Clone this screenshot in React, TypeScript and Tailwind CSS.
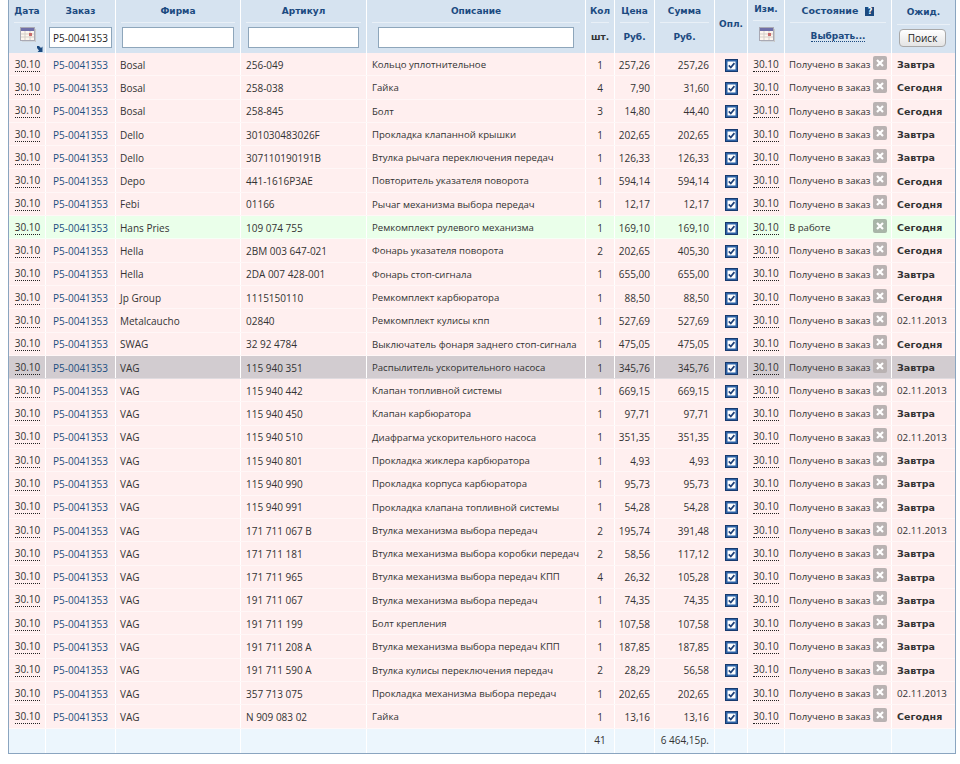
const cols = "grid grid-cols-[37px_70px_125px_126px_219px_29px_40px_60px_33px_37px_107px_63px]";
const cell = "border-r border-white flex items-center min-w-0 whitespace-nowrap";

type Row = [string, string, string, string, string, string, string];

const rows: Row[] = [
  ["Bosal", "256-049", "Кольцо уплотнительное", "1", "257,26", "257,26", "Завтра"],
  ["Bosal", "258-038", "Гайка", "4", "7,90", "31,60", "Сегодня"],
  ["Bosal", "258-845", "Болт", "3", "14,80", "44,40", "Сегодня"],
  ["Dello", "301030483026F", "Прокладка клапанной крышки", "1", "202,65", "202,65", "Завтра"],
  ["Dello", "307110190191B", "Втулка рычага переключения передач", "1", "126,33", "126,33", "Завтра"],
  ["Depo", "441-1616P3AE", "Повторитель указателя поворота", "1", "594,14", "594,14", "Сегодня"],
  ["Febi", "01166", "Рычаг механизма выбора передач", "1", "12,17", "12,17", "Сегодня"],
  ["Hans Pries", "109 074 755", "Ремкомплект рулевого механизма", "1", "169,10", "169,10", "Сегодня"],
  ["Hella", "2BM 003 647-021", "Фонарь указателя поворота", "2", "202,65", "405,30", "Сегодня"],
  ["Hella", "2DA 007 428-001", "Фонарь стоп-сигнала", "1", "655,00", "655,00", "Завтра"],
  ["Jp Group", "1115150110", "Ремкомплект карбюратора", "1", "88,50", "88,50", "Сегодня"],
  ["Metalcaucho", "02840", "Ремкомплект кулисы кпп", "1", "527,69", "527,69", "02.11.2013"],
  ["SWAG", "32 92 4784", "Выключатель фонаря заднего стоп-сигнала", "1", "475,05", "475,05", "Сегодня"],
  ["VAG", "115 940 351", "Распылитель ускорительного насоса", "1", "345,76", "345,76", "Завтра"],
  ["VAG", "115 940 442", "Клапан топливной системы", "1", "669,15", "669,15", "02.11.2013"],
  ["VAG", "115 940 450", "Клапан карбюратора", "1", "97,71", "97,71", "Завтра"],
  ["VAG", "115 940 510", "Диафрагма ускорительного насоса", "1", "351,35", "351,35", "02.11.2013"],
  ["VAG", "115 940 801", "Прокладка жиклера карбюратора", "1", "4,93", "4,93", "Завтра"],
  ["VAG", "115 940 990", "Прокладка корпуса карбюратора", "1", "95,73", "95,73", "Завтра"],
  ["VAG", "115 940 991", "Прокладка клапана топливной системы", "1", "54,28", "54,28", "Завтра"],
  ["VAG", "171 711 067 B", "Втулка механизма выбора передач", "2", "195,74", "391,48", "02.11.2013"],
  ["VAG", "171 711 181", "Втулка механизма выбора коробки передач", "2", "58,56", "117,12", "Завтра"],
  ["VAG", "171 711 965", "Втулка механизма выбора передач КПП", "4", "26,32", "105,28", "Завтра"],
  ["VAG", "191 711 067", "Втулка механизма выбора передач", "1", "74,35", "74,35", "Завтра"],
  ["VAG", "191 711 199", "Болт крепления", "1", "107,58", "107,58", "Завтра"],
  ["VAG", "191 711 208 A", "Втулка механизма выбора передач КПП", "1", "187,85", "187,85", "Завтра"],
  ["VAG", "191 711 590 A", "Втулка кулисы переключения передач", "2", "28,29", "56,58", "Завтра"],
  ["VAG", "357 713 075", "Прокладка механизма выбора передач", "1", "202,65", "202,65", "02.11.2013"],
  ["VAG", "N 909 083 02", "Гайка", "1", "13,16", "13,16", "Сегодня"],
];

function CalendarIcon() {
  return (
    <svg width="16" height="15" viewBox="0 0 16 15">
      <rect x="0.5" y="0.5" width="14" height="13" fill="#fdf6ee" stroke="#a9a9b4" />
      <rect x="1" y="1" width="13" height="3" fill="#6f6fa8" />
      <path d="M1 7h13M1 10h13M5 4v9M10 4v9" stroke="#d5cfc8" strokeWidth="1" />
      <rect x="9" y="6" width="3" height="3" fill="#c96b6b" />
      <path d="M15.5 2v13H2" fill="none" stroke="#c9c9c9" />
    </svg>
  );
}

function Checkbox() {
  return (
    <svg width="13" height="13" viewBox="0 0 13 13">
      <rect x="0.5" y="0.5" width="12" height="12" fill="#2d62a6" stroke="#173a6e" />
      <rect x="2.5" y="2.5" width="8" height="8" fill="#ffffff" />
      <path d="M3.8 6.4l2 2.1 3.6-4.4" fill="none" stroke="#1c3f78" strokeWidth="1.7" />
    </svg>
  );
}

function CloseBox({ green }: { green: boolean }) {
  return (
    <svg width="14" height="14" viewBox="0 0 14 14" className="shrink-0">
      <rect width="14" height="14" rx="2" fill={green ? "#a8b5a8" : "#b9b2b2"} />
      <path d="M4 4l6 6M10 4l-6 6" stroke="#ffffff" strokeWidth="2.2" />
    </svg>
  );
}

function Date3010() {
  return <span className="border-b border-dotted border-[#222] pb-[1px] text-[10px] leading-[11px]">30.10</span>;
}

function HeadTitle({ children }: { children: React.ReactNode }) {
  return (
    <div className="mx-[5px] h-[23px] pt-[1px] flex items-center justify-center text-[#1b4a80] font-bold border-b border-[#e9f0f7]">
      {children}
    </div>
  );
}

function Header() {
  const headCell = "border-r border-white flex flex-col min-w-0 whitespace-nowrap";
  const input = "h-[21px] border border-[#8ea6bb] bg-white px-[3px] text-[10px] text-[#222] outline-none w-full";
  return (
    <div className={`${cols} h-[53px] bg-[#d6e3f0] font-['DejaVu_Sans',sans-serif] text-[9px]`}>
      <div className={`${headCell} relative`}>
        <HeadTitle>Дата</HeadTitle>
        <div className="flex justify-center pt-[4px] pl-[1px]"><CalendarIcon /></div>
        <svg width="7" height="7" viewBox="0 0 7 7" className="absolute right-[1px] bottom-0">
          <path d="M0 0h2l2 2 1.5-1.5V6H0.5L2 4.5 0 2z" fill="#1b4a80" />
        </svg>
      </div>
      <div className={headCell}>
        <HeadTitle>Заказ</HeadTitle>
        <div className="px-[3px] pt-[4px]">
          <input readOnly value="P5-0041353" className={`${input} font-['Open_Sans',sans-serif]`} />
        </div>
      </div>
      <div className={headCell}>
        <HeadTitle>Фирма</HeadTitle>
        <div className="px-[6px] pt-[4px]"><input readOnly className={input} /></div>
      </div>
      <div className={headCell}>
        <HeadTitle>Артикул</HeadTitle>
        <div className="px-[7px] pt-[4px]"><input readOnly className={input} /></div>
      </div>
      <div className={headCell}>
        <HeadTitle>Описание</HeadTitle>
        <div className="px-[11px] pt-[4px]"><input readOnly className={input} /></div>
      </div>
      <div className={headCell}>
        <HeadTitle>Кол</HeadTitle>
        <div className="pt-[8px] text-center font-bold text-[#333]">шт.</div>
      </div>
      <div className={headCell}>
        <HeadTitle>Цена</HeadTitle>
        <div className="pt-[8px] text-center font-bold text-[#1b4a80]">Руб.</div>
      </div>
      <div className={headCell}>
        <HeadTitle>Сумма</HeadTitle>
        <div className="pt-[8px] text-center font-bold text-[#1b4a80]">Руб.</div>
      </div>
      <div className={`${headCell} items-center justify-center pb-[3px] font-bold text-[#1b4a80]`}>Опл.</div>
      <div className={headCell}>
        <div className="mx-[5px] h-[21px] flex items-center justify-center text-[#1b4a80] font-bold border-b border-[#e9f0f7]">Изм.</div>
        <div className="flex justify-center pt-[6px] pl-[1px]"><CalendarIcon /></div>
      </div>
      <div className={headCell}>
        <HeadTitle>
          <span className="text-[9.5px]">Состояние</span>
          <span className="ml-[7px] w-[9px] h-[9px] bg-[#1b4a80] text-white text-[8px] leading-[9px] text-center">?</span>
        </HeadTitle>
        <div className="pt-[7px] text-center font-bold text-[#1b4a80]">
          <span className="border-b border-dotted border-[#1b4a80]">Выбрать...</span>
        </div>
      </div>
      <div className="flex flex-col min-w-0 whitespace-nowrap">
        <div className="mx-[5px] h-[25px] pt-[2px] flex items-center justify-center text-[#1b4a80] font-bold border-b border-[#e9f0f7]">Ожид.</div>
        <div className="flex justify-center pt-[4px] pr-[2px]">
          <button className="w-[47px] h-[18px] rounded-[4px] border border-[#a9a9a9] bg-gradient-to-b from-white to-[#e4e4e4] font-['Open_Sans',sans-serif] text-[10px] text-[#222]">
            Поиск
          </button>
        </div>
      </div>
    </div>
  );
}

function DataRow({ row, index }: { row: Row; index: number }) {
  const [firm, article, desc, qty, price, sum, wait] = row;
  const green = index === 7;
  const selected = index === 13;
  const bg = green ? "bg-[#eaffea]" : selected ? "bg-[#d2ccd0]" : "bg-[#ffefef]";
  const line = green ? "border-[#f6fff6]" : selected ? "border-[#e0dce0]" : "border-[#fff7f7]";
  const isDate = wait.includes(".");
  return (
    <div className={`${cols} ${bg} ${line} border-b h-[23.3px] text-[#333]`}>
      <div className={`${cell} justify-center pt-[2px] pl-[1px]`}><Date3010 /></div>
      <div className={`${cell} pl-[7px] pt-[2px] text-[#1c4f80]`}>P5-0041353</div>
      <div className={`${cell} pl-[4px] pt-[2px]`}>{firm}</div>
      <div className={`${cell} pl-[5px] pt-[2px]`}>{article}</div>
      <div className={`${cell} pl-[5px] pt-[2px] text-[9.6px]`}>{desc}</div>
      <div className={`${cell} justify-center pt-[2px]`}>{qty}</div>
      <div className={`${cell} justify-end pr-[4px] pt-[2px]`}>{price}</div>
      <div className={`${cell} justify-end pr-[5px] pt-[2px]`}>{sum}</div>
      <div className={`${cell} justify-center pt-[2px]`}><Checkbox /></div>
      <div className={`${cell} justify-center pt-[2px]`}><Date3010 /></div>
      <div className={`${cell} pl-[4px] pr-[4px] pt-[2px] justify-between text-[9.6px]`}>
        <span>{green ? "В работе" : "Получено в заказ"}</span>
        <span className="-mt-[5px]"><CloseBox green={green} /></span>
      </div>
      <div className={`flex items-center pl-[5px] pt-[2px] whitespace-nowrap ${isDate ? "text-[9.8px]" : "font-['DejaVu_Sans',sans-serif] font-bold text-[9.5px]"}`}>{wait}</div>
    </div>
  );
}

export default function App() {
  return (
    <div className="min-h-[764px] bg-white">
      <div className="ml-2 w-[948px] border-x border-b border-[#8aa5c0] font-['Open_Sans',sans-serif] text-[10px]">
        <Header />
        {rows.map((r, i) => (
          <DataRow key={i} row={r} index={i} />
        ))}
        <div className={`${cols} h-[24px] bg-[#ecf6fd] text-[#333]`}>
          <div className={cell} />
          <div className={cell} />
          <div className={cell} />
          <div className={cell} />
          <div className={cell} />
          <div className={`${cell} justify-center`}>41</div>
          <div className={cell} />
          <div className={`${cell} justify-end pr-[5px]`}>6 464,15р.</div>
          <div className={cell} />
          <div className={cell} />
          <div className={cell} />
          <div />
        </div>
      </div>
    </div>
  );
}
